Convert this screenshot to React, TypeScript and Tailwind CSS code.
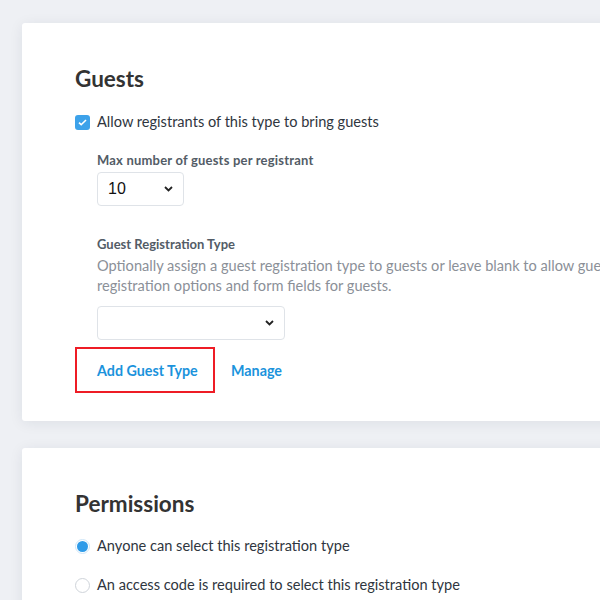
import React from 'react';

const font = { fontFamily: 'Lato, "Noto Sans", sans-serif' };

const Chevron = () => (
  <svg className="pointer-events-none absolute right-[10px] top-1/2 -translate-y-1/2" width="9" height="6" viewBox="0 0 9 6">
    <path d="M1 1l3.5 3.5L8 1" fill="none" stroke="#222" strokeWidth="1.8" />
  </svg>
);

const SelectBox = ({ value, width }: { value: string; width: string }) => (
  <div className={`relative h-[34px] ${width} rounded-[4px] border border-[#dfe3e8] bg-white`}>
    <span className="absolute left-[10px] top-1/2 -translate-y-1/2 text-[16px] text-[#111]" style={{ fontFamily: '"Liberation Sans", Arial, sans-serif' }}>
      {value}
    </span>
    <Chevron />
  </div>
);

const Radio = ({ checked, label }: { checked?: boolean; label: string }) => (
  <label className="flex items-center gap-[7px] text-[14.6px] leading-[20px] text-[#2f3640]">
    {checked ? (
      <span className="flex h-[15px] w-[15px] items-center justify-center rounded-full border border-[#cfe6f8] bg-white">
        <span className="h-[11px] w-[11px] rounded-full bg-[#2f9be8]" />
      </span>
    ) : (
      <span className="h-[15px] w-[15px] rounded-full border border-[#cfd4da] bg-white" />
    )}
    {label}
  </label>
);

export default function App() {
  return (
    <div className="h-[600px] w-[600px] overflow-hidden bg-[#eef0f4]" style={font}>
      <div className="flex w-[720px] flex-col gap-[27px] pl-[22px] pt-[23px]">
        <section className="rounded-l-[3px] bg-white pb-[28px] pl-[53px] pt-[42px] shadow-[0_2px_14px_rgba(30,40,60,0.08)]">
          <h2 className="text-[22.5px] font-bold leading-[28px] text-[#333]">Guests</h2>
          <label className="mt-[19px] flex items-center gap-[7px] text-[14.6px] leading-[20px] text-[#2f3640]">
            <span className="flex h-[15px] w-[15px] items-center justify-center rounded-[3px] bg-[#3da2ea]">
              <svg width="9" height="7" viewBox="0 0 9 7">
                <path d="M1 3.6l2.2 2.1L8 1" fill="none" stroke="#fff" strokeWidth="1.6" />
              </svg>
            </span>
            Allow registrants of this type to bring guests
          </label>
          <div className="pl-[22px]">
            <div className="mt-[20px] text-[13px] font-bold leading-[16px] tracking-[0.2px] text-[#535c66]">Max number of guests per registrant</div>
            <div className="mt-[4px]">
              <SelectBox value="10" width="w-[87px]" />
            </div>
            <div className="mt-[30px] text-[13px] font-bold leading-[16px] text-[#535c66]">Guest Registration Type</div>
            <p className="mt-[4px] whitespace-nowrap text-[14.6px] leading-[20px] text-[#8b9098]">
              Optionally assign a guest registration type to guests or leave blank to allow guests the same
              <br />
              registration options and form fields for guests.
            </p>
            <div className="mt-[10px]">
              <SelectBox value="" width="w-[188px]" />
            </div>
          </div>
          <div className="mt-[7px] flex items-center gap-[16px] pt-[2px]">
            <div className="-mt-[2px] flex h-[46px] w-[140px] items-center border-2 border-[#ee1c25] pl-[20px] pt-[2px]">
              <span className="text-[14.3px] font-bold text-[#1b93dc]">Add Guest Type</span>
            </div>
            <span className="text-[14.3px] font-bold text-[#1b93dc]">Manage</span>
          </div>
        </section>
        <section className="h-[200px] rounded-l-[3px] bg-white pl-[53px] pt-[42px] shadow-[0_2px_14px_rgba(30,40,60,0.08)]">
          <h2 className="text-[22.5px] font-bold leading-[28px] text-[#333]">Permissions</h2>
          <div className="mt-[18px] flex flex-col gap-[19px]">
            <Radio checked label="Anyone can select this registration type" />
            <Radio label="An access code is required to select this registration type" />
          </div>
        </section>
      </div>
    </div>
  );
}
